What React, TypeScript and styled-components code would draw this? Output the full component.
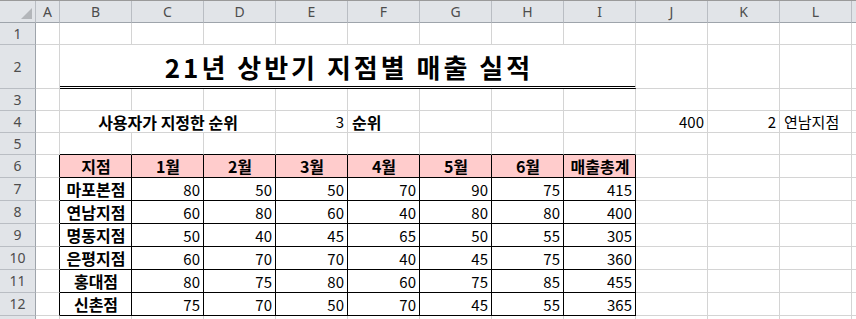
import React from "react";
import styled, { createGlobalStyle } from "styled-components";

const GRID = "#d4d4d4";
const INK = "#000000";
const HEAD_BG = "#e1e4e8";
const HEAD_LINE = "#b9bdc3";
const HEAD_EDGE = "#9ea4ab";
const PINK = "#ffcccc";

const COLS = ["A", "B", "C", "D", "E", "F", "G", "H", "I", "J", "K", "L", ""];
const COL_W = [24, 72, 72, 72, 72, 72, 72, 72, 72, 72, 72, 72, 72];
const ROW_H = [22, 44, 22, 22, 22, 23, 23, 23, 23, 23, 23, 23, 23];

const Global = createGlobalStyle`
  html, body { margin: 0; padding: 0; background: #ffffff; }
  body { width: 856px; height: 319px; overflow: hidden; }
  #root { width: 856px; height: 319px; overflow: hidden; }
`;

const Sheet = styled.div`
  display: grid;
  grid-template-columns: 36px ${COL_W.map((w) => `${w}px`).join(" ")};
  grid-template-rows: 22px ${ROW_H.map((h) => `${h}px`).join(" ")};
  font-family: "Noto Sans CJK KR", "Noto Sans", sans-serif;
  font-size: 15px;
  color: #000;
  border-top: 1px solid #9a9a9a;
  box-sizing: border-box;
`;

const Corner = styled.div`
  box-sizing: border-box;
  background: ${HEAD_BG};
  border-right: 1px solid ${HEAD_LINE};
  border-bottom: 1px solid ${HEAD_EDGE};
  display: flex;
  align-items: flex-end;
  justify-content: flex-end;
  padding: 0 3px 3px 0;
`;

const ColHead = styled.div`
  box-sizing: border-box;
  background: ${HEAD_BG};
  border-right: 1px solid ${HEAD_LINE};
  border-bottom: 1px solid ${HEAD_EDGE};
  display: flex;
  align-items: center;
  justify-content: center;
  font-family: "Noto Sans", "Noto Sans CJK KR", sans-serif;
  font-size: 14px;
  color: #4d4d4d;
  line-height: 1;
`;

const RowHead = styled.div`
  box-sizing: border-box;
  background: ${HEAD_BG};
  border-right: 1px solid ${HEAD_EDGE};
  border-bottom: 1px solid ${HEAD_LINE};
  display: flex;
  align-items: center;
  justify-content: center;
  font-family: "Noto Sans", "Noto Sans CJK KR", sans-serif;
  font-size: 14px;
  color: #4d4d4d;
  line-height: 1;
`;

type Align = "left" | "center" | "right";

const Cell = styled.div<{
  $span: number;
  $align: Align;
  $bold: boolean;
  $bg: string;
  $right: string;
  $bottom: string;
}>`
  box-sizing: border-box;
  grid-column: span ${(p) => p.$span};
  background: ${(p) => p.$bg};
  border-right: 1px solid ${(p) => p.$right};
  border-bottom: 1px solid ${(p) => p.$bottom};
  display: flex;
  align-items: center;
  justify-content: ${(p) =>
    p.$align === "left" ? "flex-start" : p.$align === "right" ? "flex-end" : "center"};
  padding: 0 3px 0 4px;
  font-size: ${(p) => (p.$bold ? "16px" : "15px")};
  font-weight: ${(p) => (p.$bold ? 700 : 400)};
  white-space: nowrap;
  line-height: 1;
`;

const TitleCell = styled.div<{ $span: number }>`
  box-sizing: border-box;
  grid-column: span ${(p) => p.$span};
  border-right: 1px solid ${GRID};
  border-bottom: 3px double ${INK};
  display: flex;
  align-items: center;
  justify-content: center;
  padding: 2px 0 0 3px;
  font-size: 26px;
  font-weight: 700;
  letter-spacing: 3px;
  white-space: nowrap;
  line-height: 1;
`;

type Desc = {
  text?: string;
  span?: number;
  align?: Align;
  bold?: boolean;
  bg?: string;
  right?: string;
  bottom?: string;
  title?: boolean;
};

const tableHead = ["지점", "1월", "2월", "3월", "4월", "5월", "6월", "매출총계"];
const tableRows: [string, number[]][] = [
  ["마포본점", [80, 50, 50, 70, 90, 75, 415]],
  ["연남지점", [60, 80, 60, 40, 80, 80, 400]],
  ["명동지점", [50, 40, 45, 65, 50, 55, 305]],
  ["은평지점", [60, 70, 70, 40, 45, 75, 360]],
  ["홍대점", [80, 75, 80, 60, 75, 85, 455]],
  ["신촌점", [75, 70, 50, 70, 45, 55, 365]],
];

const blank = (n: number, extra: Partial<Desc> = {}): Desc[] =>
  Array.from({ length: n }, () => ({ ...extra }));

function buildRows(): Desc[][] {
  const rows: Desc[][] = [];
  // row 1
  rows.push(blank(13));
  // row 2: title merged B:I
  rows.push([{}, { title: true, span: 8, text: "21년 상반기 지점별 매출 실적" }, ...blank(4)]);
  // row 3
  rows.push(blank(13));
  // row 4: A | B:D | E | F | G H I | J | K | L | M
  rows.push([
    {},
    { text: "사용자가 지정한 순위", span: 3, align: "center", bold: true },
    { text: "3", align: "right" },
    { text: "순위", align: "left", bold: true },
    {},
    {},
    {},
    { text: "400", align: "right" },
    { text: "2", align: "right" },
    { text: "연남지점", align: "left" },
    {},
  ]);
  // row 5: bottom borders black over table
  rows.push([{}, ...blank(8, { bottom: INK }), ...blank(4)]);
  // row 6: table header
  rows.push([
    { right: INK },
    ...tableHead.map((t) => ({
      text: t,
      align: "center" as Align,
      bold: true,
      bg: PINK,
      right: INK,
      bottom: INK,
    })),
    ...blank(4),
  ]);
  // rows 7-12
  tableRows.forEach(([name, vals]) => {
    rows.push([
      { right: INK },
      { text: name, align: "center", bold: true, right: INK, bottom: INK },
      ...vals.map((v) => ({ text: String(v), align: "right" as Align, right: INK, bottom: INK })),
      ...blank(4),
    ]);
  });
  // row 13
  rows.push(blank(13));
  return rows;
}

const CornerMark = () => (
  <svg width="11" height="11" viewBox="0 0 11 11">
    <polygon points="11,0 11,11 0,11" fill="#b3b6ba" />
  </svg>
);

export default function App() {
  const rows = buildRows();
  return (
    <>
      <Global />
      <Sheet>
        <Corner>
          <CornerMark />
        </Corner>
        {COLS.map((c, i) => (
          <ColHead key={i}>{c}</ColHead>
        ))}
        {rows.map((cells, ri) => (
          <React.Fragment key={ri}>
            <RowHead>{ri < 12 ? ri + 1 : ""}</RowHead>
            {cells.map((d, ci) =>
              d.title ? (
                <TitleCell key={ci} $span={d.span ?? 1}>
                  {d.text}
                </TitleCell>
              ) : (
                <Cell
                  key={ci}
                  $span={d.span ?? 1}
                  $align={d.align ?? "left"}
                  $bold={!!d.bold}
                  $bg={d.bg ?? "#ffffff"}
                  $right={d.right ?? GRID}
                  $bottom={d.bottom ?? GRID}
                >
                  {d.text}
                </Cell>
              )
            )}
          </React.Fragment>
        ))}
      </Sheet>
    </>
  );
}
